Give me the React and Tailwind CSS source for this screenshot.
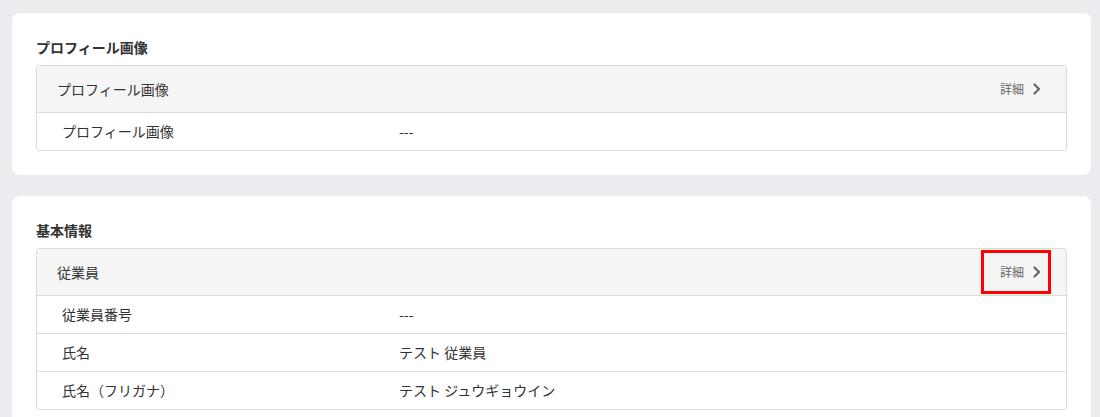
const font = { fontFamily: '"Noto Sans CJK JP", "Noto Sans", sans-serif' };

function Chevron() {
  return (
    <svg width="8" height="12" viewBox="0 0 8 12" fill="none" className="ml-[9px]">
      <path d="M1.5 1.5 L6 6 L1.5 10.5" stroke="#666" strokeWidth="2.2" strokeLinecap="round" strokeLinejoin="round" />
    </svg>
  );
}

function Section({ title, header, rows, highlight }) {
  return (
    <section className="bg-white rounded-lg px-6 pt-6 pb-6">
      <h2 className="text-[14px] leading-[20px] font-bold text-[#333]">{title}</h2>
      <div className="mt-2 border border-[#dcdcdc] rounded-[3px]">
        <div className="h-[46px] bg-[#f5f5f5] flex items-center justify-between pl-5 pr-[25px] rounded-t-[3px]">
          <span className="text-[14px] text-[#333]">{header}</span>
          <div className="relative flex items-center">
            <span className="text-[12px] text-[#666]">詳細</span>
            <Chevron />
            {highlight && (
              <div className="absolute -left-[19px] -right-[10px] -top-[13px] -bottom-[13px] border-[3px] border-[#ff0000]" />
            )}
          </div>
        </div>
        {rows.map(([label, value], i) => (
          <div key={i} className="h-[38px] border-t border-[#dcdcdc] flex items-center text-[14px] text-[#333]">
            <div className="w-[337px] pl-[25px] shrink-0">{label}</div>
            <div className="pl-[25px]">{value}</div>
          </div>
        ))}
      </div>
    </section>
  );
}

export default function App() {
  return (
    <div className="h-[417px] bg-[#ebecf0] pt-[13px] pl-3 pr-[9px] flex flex-col gap-[21px] overflow-hidden" style={font}>
      <Section
        title="プロフィール画像"
        header="プロフィール画像"
        rows={[["プロフィール画像", "---"]]}
      />
      <Section
        title="基本情報"
        header="従業員"
        highlight
        rows={[
          ["従業員番号", "---"],
          ["氏名", "テスト 従業員"],
          ["氏名（フリガナ）", "テスト ジュウギョウイン"],
        ]}
      />
    </div>
  );
}
